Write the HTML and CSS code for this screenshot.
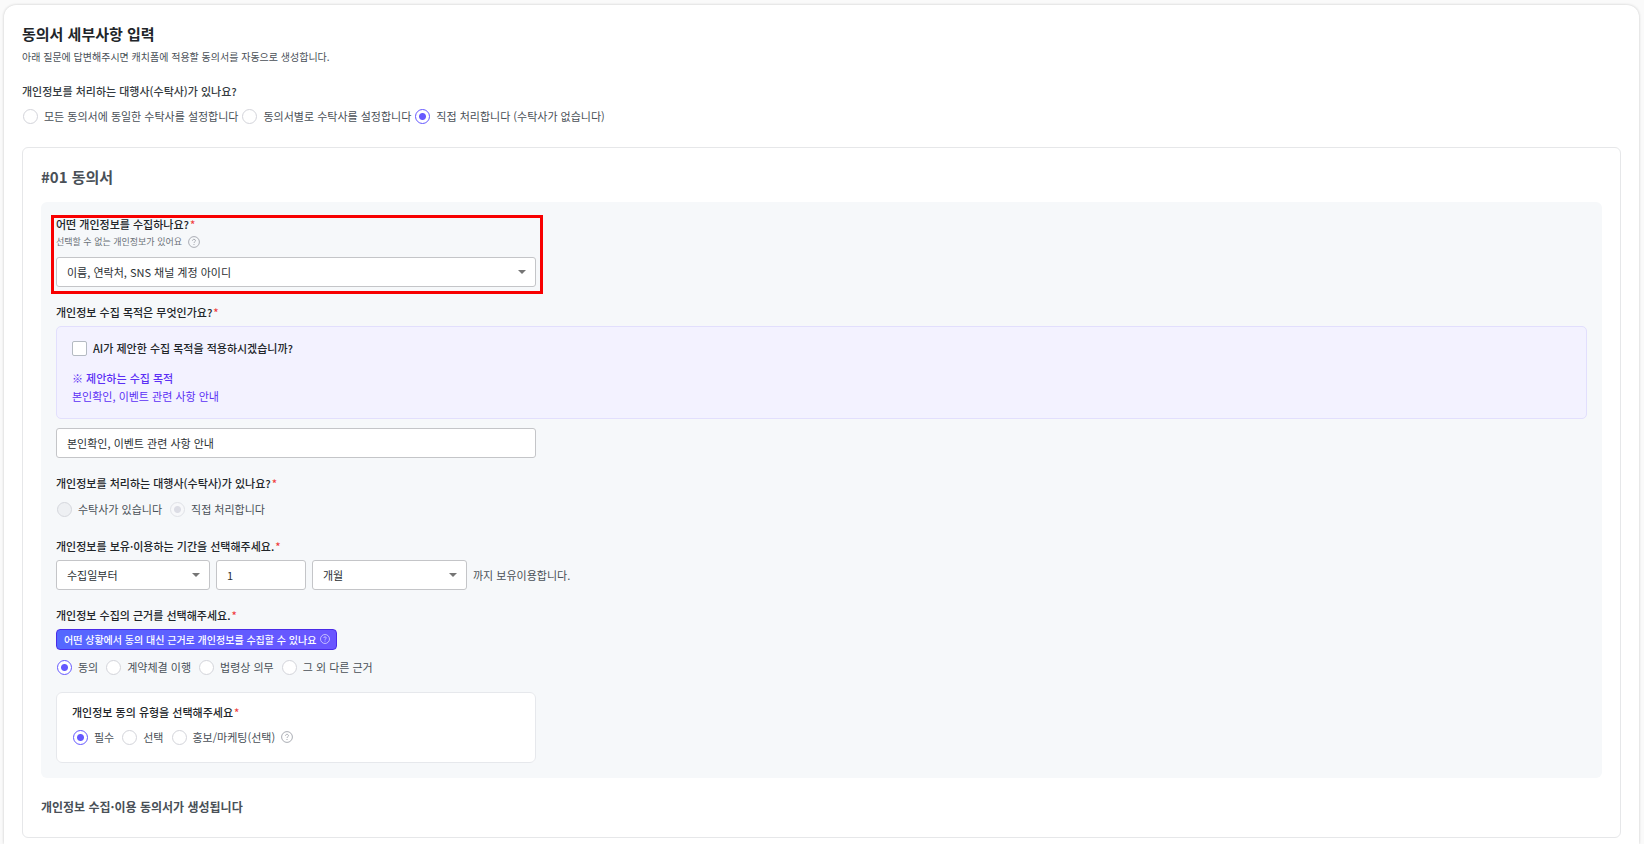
FILE: index.html
```html
<!DOCTYPE html>
<html lang="ko">
<head>
  <meta charset="UTF-8">
  <meta name="viewport" content="width=device-width, initial-scale=1.0">
  <title>동의서 세부사항 입력</title>
  <link rel="stylesheet" href="styles.css">
</head>
<body>
  <!-- 물음표 아이콘 -->
  <svg class="sprite" aria-hidden="true">
    <symbol id="icon-help" viewBox="0 0 12 12">
      <circle cx="6" cy="6" r="5.4" fill="none" stroke="currentColor" stroke-width="0.9"/>
      <path d="M4.5 4.8c0-.9.7-1.5 1.5-1.5s1.5.6 1.5 1.4c0 1-1.5 1.1-1.5 2.3" fill="none" stroke="currentColor" stroke-width="0.9"/>
      <circle cx="6" cy="8.5" r="0.6" fill="currentColor"/>
    </symbol>
  </svg>

  <main class="page">
    <h1 class="page-title">동의서 세부사항 입력</h1>
    <p class="page-desc">아래 질문에 답변해주시면 캐치폼에 적용할 동의서를 자동으로 생성합니다.</p>

    <fieldset class="agency">
      <legend class="agency-title">개인정보를 처리하는 대행사(수탁사)가 있나요?</legend>
      <div class="radios">
        <label class="radio"><input type="radio" name="agency">모든 동의서에 동일한 수탁사를 설정합니다</label>
        <label class="radio"><input type="radio" name="agency">동의서별로 수탁사를 설정합니다</label>
        <label class="radio"><input type="radio" name="agency" checked>직접 처리합니다 (수탁사가 없습니다)</label>
      </div>
    </fieldset>

    <section class="consent">
      <h2 class="consent-title">#01 동의서</h2>

      <div class="panel">
        <!-- 수집 항목 -->
        <div class="field highlight">
          <label class="label" for="items">어떤 개인정보를 수집하나요?<span class="req">*</span></label>
          <p class="hint">선택할 수 없는 개인정보가 있어요 <svg class="help"><use href="#icon-help"/></svg></p>
          <div class="select">
            <select id="items">
              <option>이름, 연락처, SNS 채널 계정 아이디</option>
            </select>
          </div>
        </div>

        <!-- 수집 목적 -->
        <div class="field">
          <label class="label" for="purpose">개인정보 수집 목적은 무엇인가요?<span class="req">*</span></label>
          <div class="suggest">
            <label class="check"><input type="checkbox">AI가 제안한 수집 목적을 적용하시겠습니까?</label>
            <p class="suggest-title">※ 제안하는 수집 목적</p>
            <p class="suggest-text">본인확인, 이벤트 관련 사항 안내</p>
          </div>
          <input class="text" type="text" id="purpose" value="본인확인, 이벤트 관련 사항 안내">
        </div>

        <!-- 수탁사 -->
        <fieldset class="field">
          <legend class="label">개인정보를 처리하는 대행사(수탁사)가 있나요?<span class="req">*</span></legend>
          <div class="radios">
            <label class="radio"><input type="radio" name="trustee" disabled>수탁사가 있습니다</label>
            <label class="radio"><input type="radio" name="trustee" disabled checked>직접 처리합니다</label>
          </div>
        </fieldset>

        <!-- 보유 기간 -->
        <div class="field field-period">
          <label class="label" for="start">개인정보를 보유·이용하는 기간을 선택해주세요.<span class="req">*</span></label>
          <div class="period">
            <div class="select">
              <select id="start">
                <option>수집일부터</option>
              </select>
            </div>
            <input class="text" type="text" value="1" aria-label="기간">
            <div class="select">
              <select aria-label="단위">
                <option>개월</option>
              </select>
            </div>
            <span>까지 보유이용합니다.</span>
          </div>
        </div>

        <!-- 수집 근거 -->
        <fieldset class="field">
          <legend class="label">개인정보 수집의 근거를 선택해주세요.<span class="req">*</span></legend>
          <button type="button" class="guide">어떤 상황에서 동의 대신 근거로 개인정보를 수집할 수 있나요 <svg class="help"><use href="#icon-help"/></svg></button>
          <div class="radios">
            <label class="radio"><input type="radio" name="basis" checked>동의</label>
            <label class="radio"><input type="radio" name="basis">계약체결 이행</label>
            <label class="radio"><input type="radio" name="basis">법령상 의무</label>
            <label class="radio"><input type="radio" name="basis">그 외 다른 근거</label>
          </div>
        </fieldset>

        <!-- 동의 유형 -->
        <fieldset class="type">
          <legend class="label">개인정보 동의 유형을 선택해주세요<span class="req">*</span></legend>
          <div class="radios">
            <label class="radio"><input type="radio" name="type" checked>필수</label>
            <label class="radio"><input type="radio" name="type">선택</label>
            <label class="radio"><input type="radio" name="type">홍보/마케팅(선택) <svg class="help"><use href="#icon-help"/></svg></label>
          </div>
        </fieldset>
      </div>

      <h3 class="result-title">개인정보 수집·이용 동의서가 생성됩니다</h3>
    </section>
  </main>
</body>
</html>
```

FILE: styles.css
```css
* {
  box-sizing: border-box;
}
body {
  margin: 0;
  padding: 5px 5px 0 4px;
  min-height: 100vh;
  display: flex;
  background-color: #fafafa;
  color: #495057;
  font-family: "Noto Sans CJK KR", sans-serif;
  font-size: 11px;
  line-height: 16px;
}
h1, h2, h3, p {
  margin: 0;
}
fieldset {
  margin: 0;
  padding: 0;
  border: none;
  min-width: 0;
}
legend {
  padding: 0;
}
input, select, button {
  margin: 0;
  font-family: inherit;
  font-size: inherit;
}
.sprite {
  position: absolute;
  width: 0;
  height: 0;
}
.page {
  flex: 1;
  padding: 18px 18px 6px;
  background: #fff;
  border-radius: 12px 12px 0 0;
  box-shadow: 0 0 3px rgba(0, 0, 0, 0.2);
}
.page-title {
  font-size: 15px;
  line-height: 22px;
  font-weight: bold;
  color: #212529;
}
.page-desc {
  margin-top: 4px;
  font-size: 10px;
}
.agency {
  margin-top: 18px;
}
.agency-title {
  font-weight: 500;
  color: #343a40;
}

/* 라디오 / 체크박스 */
.radios {
  display: flex;
  flex-wrap: wrap;
  gap: 8px;
  margin-top: 9px;
  padding-left: 1px;
}
.agency .radios {
  gap: 4px;
}
.radio {
  display: flex;
  align-items: center;
  gap: 6px;
}
.radio input {
  appearance: none;
  width: 15px;
  height: 15px;
  border: 1px solid #d3d4da;
  border-radius: 50%;
  background: #fff;
}
.radio input:checked {
  border-color: #6558ff;
  background: radial-gradient(circle, #6558ff 3px, #fff 4px);
}
.radio input:disabled {
  border-color: #d5d7dd;
  background: #eef0f3;
}
.radio input:disabled:checked {
  border-color: #e0e2e7;
  background: radial-gradient(circle, #dcdde5 3px, #f7f8fa 4px);
}
.check {
  display: flex;
  align-items: center;
  gap: 6px;
  font-weight: 500;
  color: #212529;
}
.check input {
  appearance: none;
  width: 15px;
  height: 15px;
  border: 1px solid #b4bac2;
  border-radius: 2px;
  background: #fff;
}

/* 동의서 카드 */
.consent {
  margin-top: 23px;
  padding: 18px 18px 21px;
  border: 1px solid #e6e7e9;
  border-radius: 6px;
}
.consent-title {
  font-size: 15px;
  line-height: 22px;
  font-weight: bold;
}
.panel {
  margin-top: 14px;
  padding: 14px 15px 15px;
  border-radius: 6px;
  background: #f6f8fa;
}
.field {
  margin-bottom: 17px;
}
.field-period {
  margin-top: 21px;
}
.label {
  display: block;
  font-weight: 500;
  color: #212529;
}
.req {
  margin-left: 1px;
  color: #f03e3e;
}
.hint {
  display: flex;
  align-items: center;
  gap: 6px;
  margin: 2px 0 7px;
  font-size: 9px;
  color: #6b7178;
}
.help {
  width: 12px;
  height: 12px;
  color: #a0a4ac;
}
.highlight {
  position: relative;
  width: 480px;
  max-width: 100%;
}
.highlight::after {
  content: "";
  position: absolute;
  inset: -1px -7px -7px -5px;
  border: 3px solid #f80000;
  pointer-events: none;
}

/* 입력 */
.select {
  position: relative;
}
.select::after {
  content: "";
  position: absolute;
  top: 13px;
  right: 10px;
  border: 4px solid transparent;
  border-top-color: #757575;
  border-bottom: none;
  pointer-events: none;
}
select, .text {
  display: block;
  appearance: none;
  width: 100%;
  height: 30px;
  padding: 0 10px;
  border: 1px solid #c4c5c8;
  border-radius: 3px;
  background: #fff;
  color: #2b2f33;
}
.text {
  max-width: 480px;
}
.suggest {
  margin: 6px 0 9px;
  padding: 13px 15px 14px;
  border: 1px solid #e2dffd;
  border-radius: 5px;
  background: #f3f2ff;
  color: #5b2ff5;
}
.suggest-title {
  margin-top: 14px;
  font-weight: 500;
}
.suggest-text {
  margin-top: 2px;
}
.field .radios {
  margin-top: 10px;
}
.field .guide + .radios {
  margin-top: 9px;
}
.period {
  display: grid;
  grid-template-columns: 154px 90px 155px auto;
  justify-content: start;
  align-items: center;
  gap: 6px;
  margin-top: 6px;
}
.guide {
  display: flex;
  align-items: center;
  gap: 4px;
  height: 21px;
  margin-top: 6px;
  padding: 0 6px 1px 7px;
  border: 1px solid #4a2be8;
  border-radius: 4px;
  background: linear-gradient(90deg, #5468ff, #6a55ff);
  color: #fff;
  font-size: 10px;
  font-weight: 500;
}
.guide .help {
  width: 10px;
  height: 10px;
  color: #e0deff;
}
.type {
  max-width: 480px;
  padding: 11px 15px 17px;
  border: 1px solid #e6e8ec;
  border-radius: 6px;
  background: #fff;
}
.type .label {
  float: left;
}
.type .radios {
  clear: both;
  padding-top: 9px;
  margin-top: 0;
}
.result-title {
  margin-top: 20px;
  font-size: 12px;
  line-height: 18px;
  font-weight: bold;
}
```
